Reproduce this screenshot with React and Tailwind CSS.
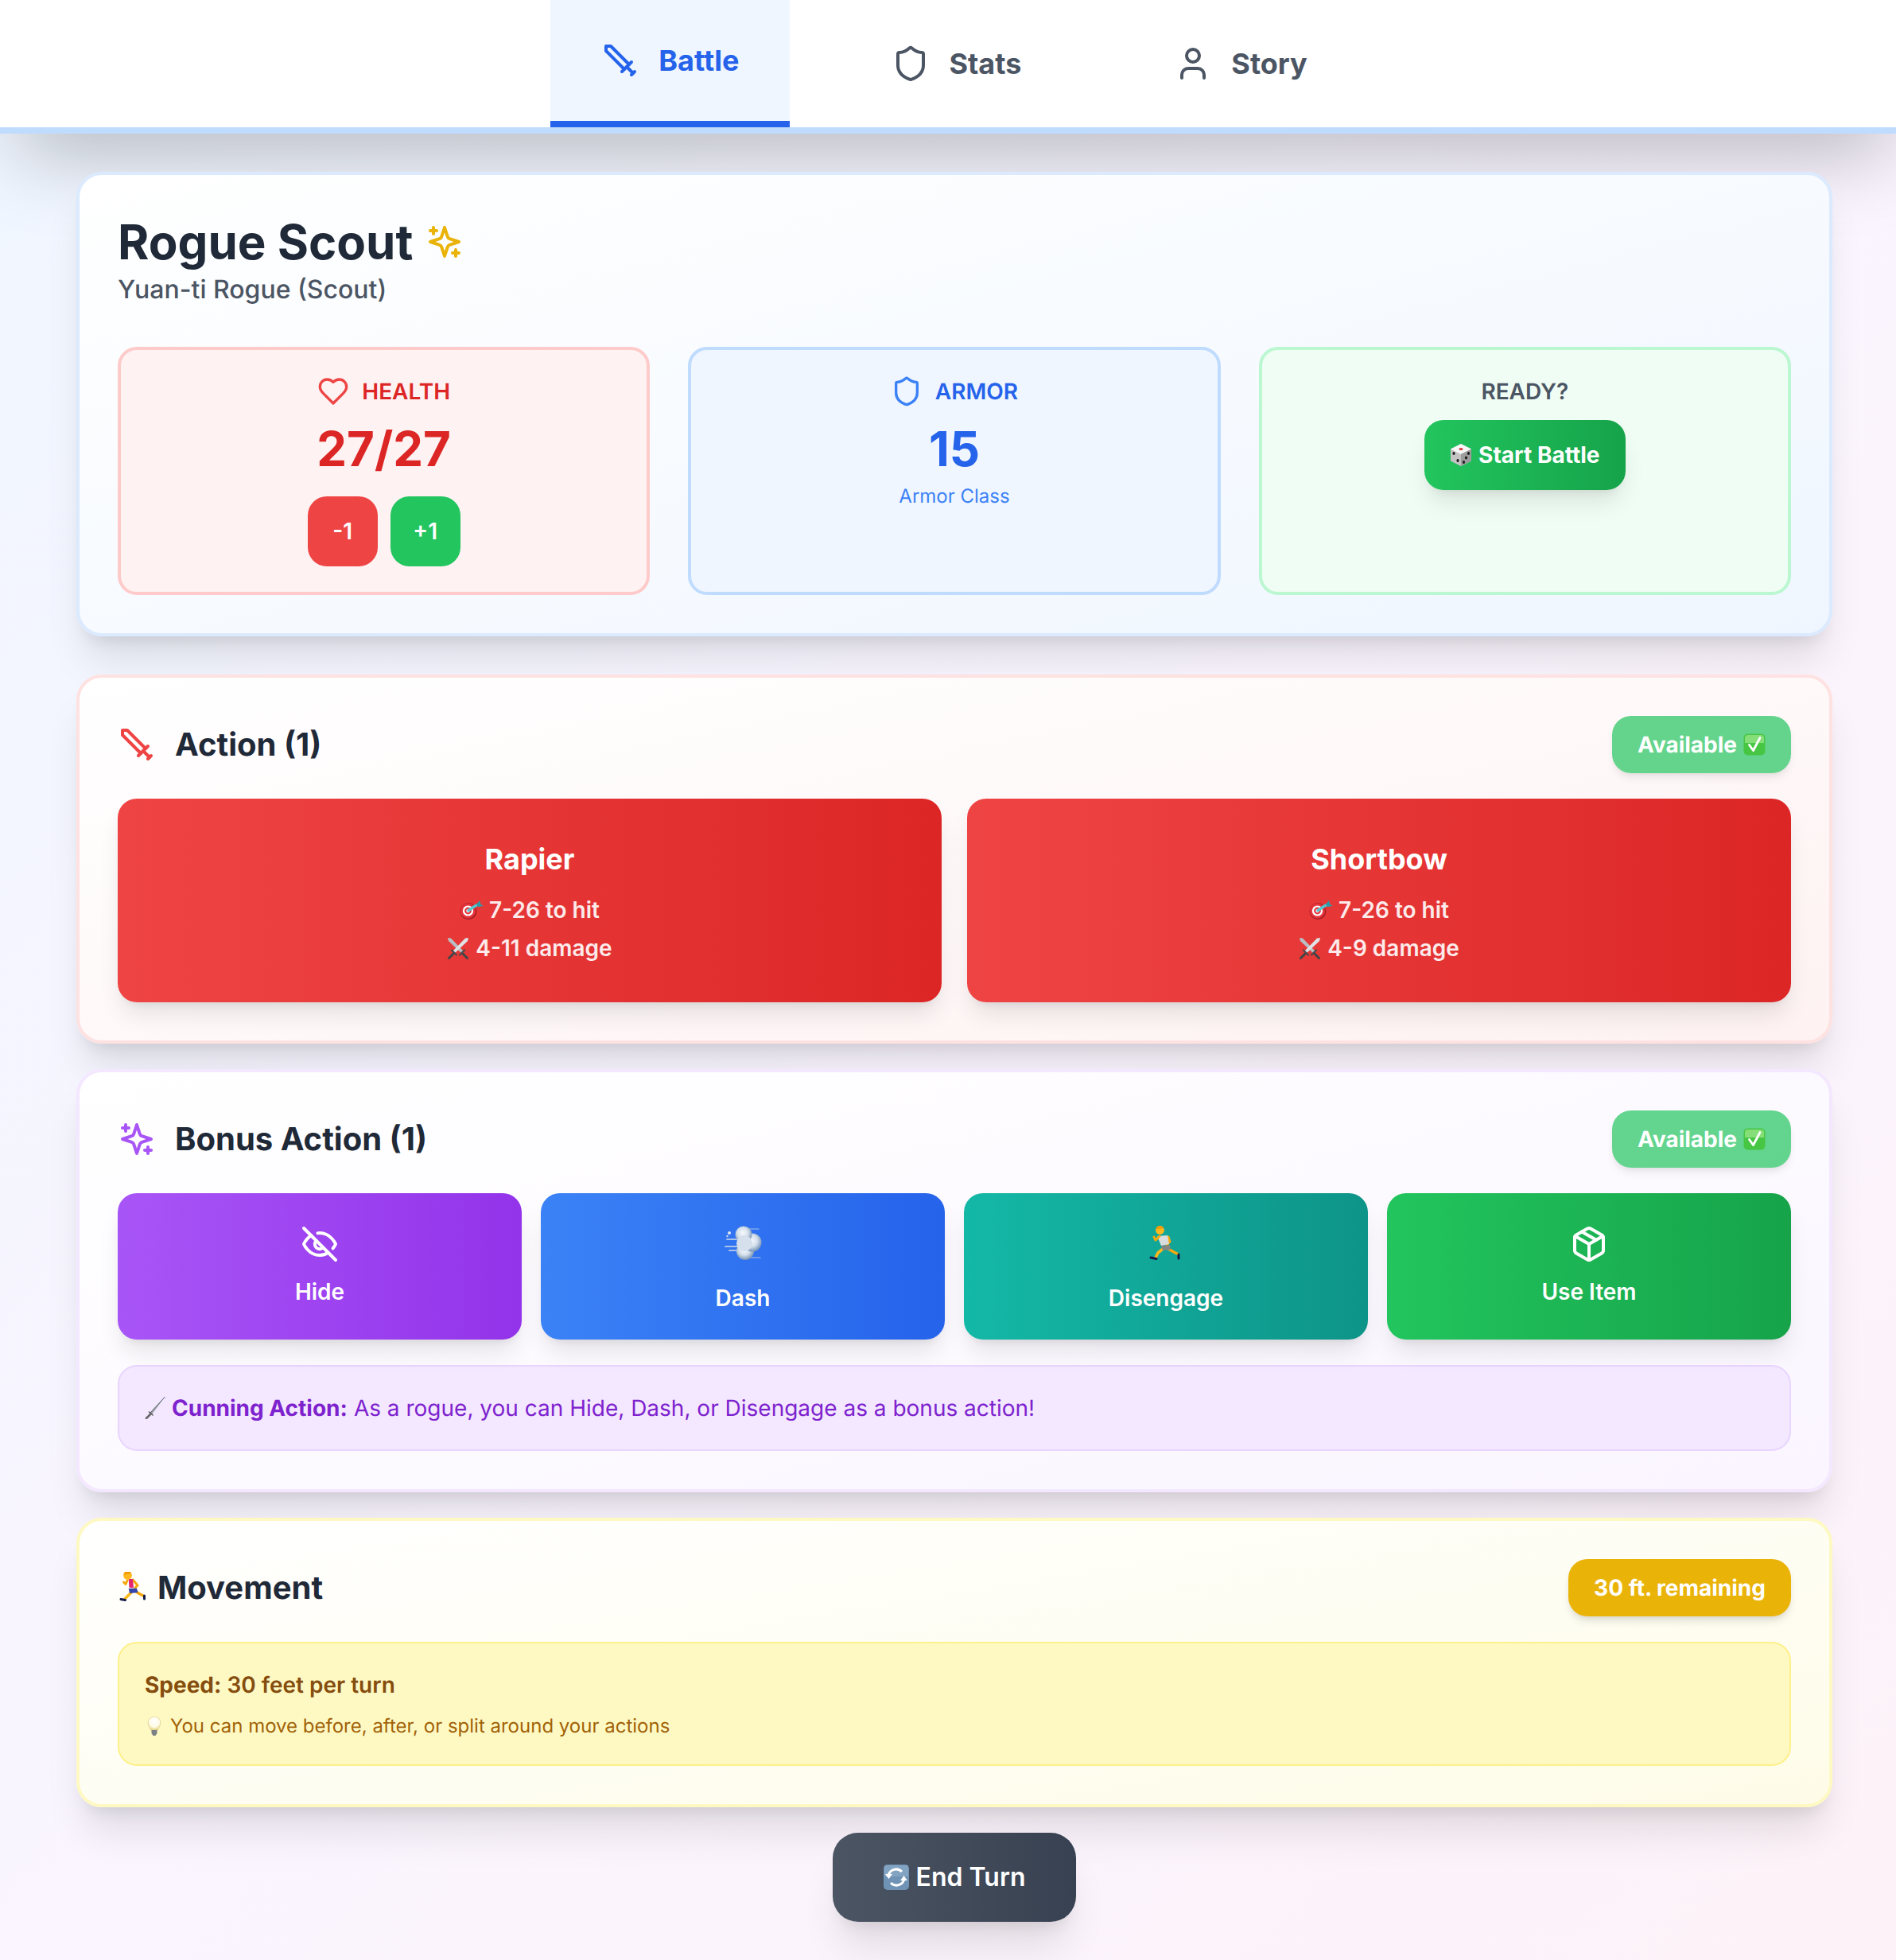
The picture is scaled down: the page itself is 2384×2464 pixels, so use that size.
const Ico = ({ size = 48, className = '', children }) => (
  <svg width={size} height={size} viewBox="0 0 24 24" fill="none" stroke="currentColor" strokeWidth="2" strokeLinecap="round" strokeLinejoin="round" className={`shrink-0 ${className}`}>
    {children}
  </svg>
);

const SwordIcon = (p) => (
  <Ico {...p}>
    <polyline points="14.5 17.5 3 6 3 3 6 3 17.5 14.5" />
    <line x1="13" x2="19" y1="19" y2="13" />
    <line x1="16" x2="20" y1="16" y2="20" />
    <line x1="19" x2="21" y1="21" y2="19" />
  </Ico>
);
const ShieldIcon = (p) => (
  <Ico {...p}>
    <path d="M20 13c0 5-3.5 7.5-7.66 8.95a1 1 0 0 1-.67-.01C7.5 20.5 4 18 4 13V6a1 1 0 0 1 1-1c2 0 4.5-1.2 6.24-2.72a1.17 1.17 0 0 1 1.52 0C14.51 3.81 17 5 19 5a1 1 0 0 1 1 1z" />
  </Ico>
);
const UserIcon = (p) => (
  <Ico {...p}>
    <path d="M19 21v-2a4 4 0 0 0-4-4H9a4 4 0 0 0-4 4v2" />
    <circle cx="12" cy="7" r="4" />
  </Ico>
);
const HeartIcon = (p) => (
  <Ico {...p}>
    <path d="M19 14c1.49-1.46 3-3.21 3-5.5A5.5 5.5 0 0 0 16.5 3c-1.76 0-3 .5-4.5 2-1.5-1.5-2.74-2-4.5-2A5.5 5.5 0 0 0 2 8.5c0 2.3 1.5 4.05 3 5.5l7 7Z" />
  </Ico>
);
const SparklesIcon = (p) => (
  <Ico {...p}>
    <path d="m12 3-1.912 5.813a2 2 0 0 1-1.275 1.275L3 12l5.813 1.912a2 2 0 0 1 1.275 1.275L12 21l1.912-5.813a2 2 0 0 1 1.275-1.275L21 12l-5.813-1.912a2 2 0 0 1-1.275-1.275L12 3Z" />
    <path d="M5 3v4" />
    <path d="M19 17v4" />
    <path d="M3 5h4" />
    <path d="M17 19h4" />
  </Ico>
);
const EyeOffIcon = (p) => (
  <Ico {...p}>
    <path d="M9.88 9.88a3 3 0 1 0 4.24 4.24" />
    <path d="M10.73 5.08A10.43 10.43 0 0 1 12 5c7 0 10 7 10 7a13.16 13.16 0 0 1-1.67 2.68" />
    <path d="M6.61 6.61A13.526 13.526 0 0 0 2 12s3 7 10 7a9.74 9.74 0 0 0 5.39-1.61" />
    <line x1="2" x2="22" y1="2" y2="22" />
  </Ico>
);
const PackageIcon = (p) => (
  <Ico {...p}>
    <path d="m7.5 4.27 9 5.15" />
    <path d="M21 8a2 2 0 0 0-1-1.73l-7-4a2 2 0 0 0-2 0l-7 4A2 2 0 0 0 3 8v8a2 2 0 0 0 1 1.73l7 4a2 2 0 0 0 2 0l7-4A2 2 0 0 0 21 16Z" />
    <path d="m3.3 7 8.7 5 8.7-5" />
    <path d="M12 22V12" />
  </Ico>
);

// emoji drawings (no emoji font in the sandbox)
const Dice = () => (
  <svg width="28" height="28" viewBox="0 0 28 28" className="shrink-0">
    <path d="M14 0 27 6.5v15L14 28 1 21.5v-15z" fill="#c4c4c4" />
    <path d="M14 0 27 6.5 14 13 1 6.5z" fill="#f7f7f7" />
    <path d="M14 13v15l13-6.5v-15z" fill="#9c9c9c" />
    <ellipse cx="14" cy="6.5" rx="2.6" ry="1.5" fill="#d9363e" />
    <ellipse cx="5" cy="12" rx="1.6" ry="2" fill="#1c1c1c" />
    <ellipse cx="10" cy="21" rx="1.6" ry="2" fill="#1c1c1c" />
    <ellipse cx="17.5" cy="23" rx="1.6" ry="2" fill="#1c1c1c" />
    <ellipse cx="23.5" cy="12" rx="1.6" ry="2" fill="#1c1c1c" />
    <ellipse cx="20.5" cy="17.5" rx="1.6" ry="2" fill="#1c1c1c" />
  </svg>
);
const Check = () => (
  <svg width="28" height="28" viewBox="0 0 28 28" className="shrink-0">
    <rect x="0.5" y="0.5" width="27" height="27" rx="5" fill="#47c644" />
    <path d="M2 6a4 4 0 0 1 4-4h16a4 4 0 0 1 4 4v6H2z" fill="#86de78" />
    <path d="M7.5 14.5 12.5 21.5 21 5.5" fill="none" stroke="#fff" strokeWidth="2.8" strokeLinecap="round" strokeLinejoin="round" />
  </svg>
);
const Dart = () => (
  <svg width="30" height="24" viewBox="0 0 30 24" className="shrink-0">
    <circle cx="11" cy="13.5" r="10.5" fill="#a51c24" />
    <circle cx="10.5" cy="13" r="9.5" fill="#e5343b" />
    <circle cx="10.5" cy="13" r="6.6" fill="#fff" />
    <circle cx="10.5" cy="13" r="4.4" fill="#e5343b" />
    <circle cx="10.5" cy="13" r="2.2" fill="#fff" />
    <path d="M11 12.5 21 6" stroke="#54c6cf" strokeWidth="3.4" strokeLinecap="round" />
    <path d="M21 5 25 0l1.5 5L30 7l-7 1z" fill="#2e9aa8" />
  </svg>
);
const Swords = () => (
  <svg width="28" height="28" viewBox="0 0 28 28" className="shrink-0">
    <path d="M1 1 5 1.5 21 18l-2.5 2.5L2 5z" fill="#b9bfc5" />
    <path d="M27 1 23 1.5 7 18l2.5 2.5L26 5z" fill="#dfe3e6" />
    <path d="M16 22.5l6-6M12 22.5l-6-6" stroke="#4a4a4a" strokeWidth="2.2" strokeLinecap="round" />
    <path d="M20 21l5.5 5.5M8 21l-5.5 5.5" stroke="#444" strokeWidth="3" strokeLinecap="round" />
  </svg>
);
const Dagger = () => (
  <svg width="26" height="28" viewBox="0 0 26 28" className="shrink-0">
    <path d="M25.5 0 7 20l2 2z" fill="#9aa1a6" />
    <path d="M25.5 0 7 20" stroke="#4f565b" strokeWidth="0.9" />
    <path d="M5.5 19l4.5 4" stroke="#5a5a5a" strokeWidth="1.6" strokeLinecap="round" />
    <path d="M7 22l-5 5" stroke="#666" strokeWidth="2.6" strokeLinecap="round" />
  </svg>
);
const Bulb = () => (
  <svg width="24" height="24" viewBox="0 0 24 24" className="shrink-0">
    <defs>
      <radialGradient id="bulbGlow" cx="50%" cy="35%" r="60%">
        <stop offset="0%" stopColor="#ffffff" />
        <stop offset="70%" stopColor="#fffbe6" />
        <stop offset="100%" stopColor="#ead98f" />
      </radialGradient>
    </defs>
    <path d="M12 0a8 8 0 0 0-8 8c0 3.4 2.6 5 3.4 9h9.2c.8-4 3.4-5.6 3.4-9a8 8 0 0 0-8-8z" fill="url(#bulbGlow)" stroke="#d8cb8c" strokeWidth="0.7" />
    <path d="M8.5 17h7v4l-2 3h-3l-2-3z" fill="#7c8186" />
  </svg>
);
const Sync = () => (
  <svg width="32" height="32" viewBox="0 0 32 32" className="shrink-0">
    <rect width="32" height="32" rx="5" fill="#6f93b5" />
    <path d="M1 1h30v14H1z" fill="#a9c3dc" opacity="0.35" />
    <path d="M6 14a10 10 0 0 1 17-5" fill="none" stroke="#fff" strokeWidth="3" />
    <path d="M26 18a10 10 0 0 1-17 5" fill="none" stroke="#fff" strokeWidth="3" />
    <path d="M2 12h9l-4.5 6zM30 20h-9l4.5-6z" fill="#fff" />
  </svg>
);
const Cloud = () => (
  <svg width="48" height="48" viewBox="10 10 48 48" className="shrink-0">
    <defs>
      <radialGradient id="puff" cx="45%" cy="40%" r="58%">
        <stop offset="0%" stopColor="#f6f9fc" />
        <stop offset="55%" stopColor="#d5e0ec" />
        <stop offset="100%" stopColor="#7d98b8" />
      </radialGradient>
    </defs>
    <g stroke="#cfdcea" strokeLinecap="round" opacity="0.75" fill="none">
      <path d="M42 15h12" strokeWidth="1.2" />
      <path d="M44 51h12" strokeWidth="1.2" />
      <path d="M14 28h16" strokeWidth="1.8" />
      <path d="M12 37h16" strokeWidth="1.8" />
      <path d="M17 42h10" strokeWidth="1.8" />
    </g>
    <circle cx="17" cy="20" r="2" fill="#dfe8f2" />
    <circle cx="14.5" cy="24" r="1.2" fill="#cfdbe8" />
    <circle cx="37" cy="43" r="11" fill="url(#puff)" />
    <circle cx="46" cy="32" r="11.5" fill="url(#puff)" />
    <circle cx="35" cy="22" r="10.5" fill="url(#puff)" />
    <circle cx="36" cy="33" r="10" fill="#d5e0ec" />
  </svg>
);

const Runner = ({ size, viewBox, shirt, shorts, head, arms, shirtPts, shortPts, front, back, foot1, foot2 }) => (
  <svg width={size} height={size} viewBox={viewBox} className="shrink-0">
    <g fill="none" strokeLinecap="round" strokeLinejoin="round">
      <polyline points={back} stroke="#f5a80c" strokeWidth="3.4" />
      <polyline points={front} stroke="#fbb81b" strokeWidth="3.6" />
      <polyline points={foot1} stroke="#141a4a" strokeWidth="3" />
      <polyline points={foot2} stroke="#141a4a" strokeWidth="3" />
      <polyline points={arms[0]} stroke="#f5a80c" strokeWidth="3" />
    </g>
    <polygon points={shortPts} fill={shorts} />
    <polygon points={shirtPts} fill={shirt} />
    <polyline points={arms[1]} fill="none" stroke="#f5a80c" strokeWidth="3" strokeLinecap="round" strokeLinejoin="round" />
    <circle cx={head[0]} cy={head[1]} r="5.4" fill="#ffb81f" />
    <path d={`M${head[0] - 5} ${head[1] - 1}a5 5 0 0 1 9.6-1.4l-3 .4z`} fill="#f09a05" />
  </svg>
);

const GreyRunner = () => (
  <Runner
    size={48} viewBox="12 10 48 48" shirt="#d9dcdc" shorts="#858583" head={[28.5, 16.5]}
    arms={['39,25 41,31 37,35', '28,24 23,29 21,25']}
    shirtPts="25,24 38,23 40,34 30,36" shortPts="30,36 41,35 42,41 32,42"
    front="31,41 26,45 23,51" back="39,40 46,44 51,46.5" foot1="17,51 24,52.5" foot2="52,47 52,52"
  />
);
const PinkRunner = () => (
  <Runner
    size={40} viewBox="8 11 40 40" shirt="#e4266f" shorts="#3345ab" head={[20.5, 15.5]}
    arms={['27,21 33,28 30,31', '20,22 18,26.5 15.5,24']}
    shirtPts="21.7,20 27,20 28,31 22.5,31" shortPts="21.7,32 32,31.7 33.5,37 23,38"
    front="25,37 21,41 17,45" back="31,36 36,39 40,41" foot1="12,45.5 17.5,46.5" foot2="41.5,41 41.5,45"
  />
);

const lgShadow = 'shadow-[0_20px_30px_-6px_rgba(0,0,0,0.1),0_8px_12px_-8px_rgba(0,0,0,0.1)]';
const cardClass = 'rounded-[32px] border-4 p-[48px] bg-linear-to-br/srgb from-[#ffffff] shadow-[0_40px_50px_-10px_rgba(0,0,0,0.1),0_16px_20px_-12px_rgba(0,0,0,0.1)]';
const headClass = 'text-[40px] leading-[56px] font-bold text-[#1f2937]';
const bigClass = 'text-[60px] leading-[72px] font-bold [text-rendering:auto]';

function Tab({ icon, label, active }) {
  return (
    <button className={`flex items-center gap-[24px] px-[64px] text-[36px] leading-[56px] font-bold ${active ? 'bg-[#eff6ff] text-[#2563eb] border-b-8 border-[#2563eb]' : 'text-[#4b5563]'}`}>
      {icon}
      {label}
    </button>
  );
}

function Badge() {
  return (
    <div className="flex items-center gap-[8px] h-[72px] px-[32px] rounded-[24px] bg-[#22c55e]/70 text-white text-[28px] leading-[40px] font-bold shadow-[0_8px_12px_-2px_rgba(0,0,0,0.07),0_4px_8px_-4px_rgba(0,0,0,0.07)]">
      Available <Check />
    </div>
  );
}

function Weapon({ name, hit, damage }) {
  return (
    <button className={`flex flex-col items-center p-[48px] rounded-[24px] text-white bg-linear-to-r/srgb from-[#ef4444] to-[#dc2626] ${lgShadow}`}>
      <div className="text-[36px] leading-[56px] font-bold mb-[16px]">{name}</div>
      <div className="flex items-center justify-center gap-[7px] h-[40px] text-[28px] leading-[40px] font-semibold text-white/90"><Dart />{hit} to hit</div>
      <div className="flex items-center justify-center gap-[8px] h-[40px] mt-[8px] text-[28px] leading-[40px] font-semibold text-white/90"><Swords />{damage} damage</div>
    </button>
  );
}

function Bonus({ icon, label, gradient, tall }) {
  return (
    <button className={`flex flex-col items-center h-[184px] pt-[40px] rounded-[24px] text-white bg-linear-to-r/srgb ${gradient} ${lgShadow}`}>
      <div className={tall ? 'h-[64px] mb-[8px]' : 'h-[48px] mb-[16px]'}>{icon}</div>
      <div className="text-[28px] leading-[40px] font-semibold">{label}</div>
    </button>
  );
}

function StatLabel({ icon, label, className }) {
  return (
    <div className={`flex items-center justify-center gap-[16px] h-[40px] mb-[16px] text-[28px] leading-[40px] font-semibold ${className}`}>
      {icon}
      {label}
    </div>
  );
}

export default function App() {
  return (
    <div className="w-[2384px] overflow-hidden font-[Inter,sans-serif] [text-rendering:geometricPrecision]">
      <div className="w-[2400px] min-h-[2464px] bg-linear-to-br/srgb from-[#eff6ff] via-[#faf5ff] to-[#fdf2f8]">
        <nav className="flex justify-center gap-[64px] h-[168px] bg-white border-b-8 border-[#bfdbfe] shadow-[0_50px_100px_-24px_rgba(0,0,0,0.25)]">
          <Tab active label="Battle" icon={<SwordIcon />} />
          <Tab label="Stats" icon={<ShieldIcon />} />
          <Tab label="Story" icon={<UserIcon />} />
        </nav>

        <main className="px-[96px] pt-[48px] pb-[48px]">
          <section className={`${cardClass} border-[#dbeafe] to-[#eff6ff] mb-[48px]`}>
            <div className={`flex items-center gap-[16px] text-[#1f2937] ${bigClass}`}>
              Rogue Scout
              <SparklesIcon className="text-[#eab308]" />
            </div>
            <p className="text-[32px] leading-[48px] font-medium text-[#4b5563] mb-[48px]">Yuan-ti Rogue (Scout)</p>

            <div className="grid grid-cols-3 gap-[48px]">
              <div className="flex flex-col items-center p-[32px] rounded-[24px] border-4 border-[#fecaca] bg-[#fef2f2]">
                <StatLabel label="HEALTH" className="text-[#dc2626]" icon={<HeartIcon size={40} className="text-[#ef4444]" />} />
                <div className={`text-[#dc2626] ${bigClass}`}>27/27</div>
                <div className="flex gap-[16px] mt-[24px]">
                  <button className="w-[88px] h-[88px] rounded-[24px] bg-[#ef4444] text-white text-[28px] font-semibold">-1</button>
                  <button className="w-[88px] h-[88px] rounded-[24px] bg-[#22c55e] text-white text-[28px] font-semibold">+1</button>
                </div>
              </div>

              <div className="flex flex-col items-center p-[32px] rounded-[24px] border-4 border-[#bfdbfe] bg-[#eff6ff]">
                <StatLabel label="ARMOR" className="text-[#2563eb]" icon={<ShieldIcon size={40} className="text-[#3b82f6]" />} />
                <div className={`text-[#2563eb] ${bigClass}`}>15</div>
                <div className="mt-[8px] text-[24px] leading-[32px] text-[#3b82f6]">Armor Class</div>
              </div>

              <div className="flex flex-col items-center p-[32px] rounded-[24px] border-4 border-[#bbf7d0] bg-[#f0fdf4]">
                <StatLabel label="READY?" className="text-[#4b5563]" />
                <button className={`flex items-center gap-[8px] h-[88px] px-[32px] rounded-[24px] text-white text-[28px] leading-[40px] font-bold bg-linear-to-r/srgb from-[#22c55e] to-[#16a34a] ${lgShadow}`}>
                  <Dice />
                  Start Battle
                </button>
              </div>
            </div>
          </section>

          <div className="flex flex-col gap-[32px]">
            <section className={`${cardClass} border-[#fee2e2] to-[#fef2f2]`}>
              <div className="flex items-center justify-between mb-[32px]">
                <div className={`flex items-center gap-[24px] ${headClass}`}>
                  <SwordIcon className="text-[#ef4444]" />
                  Action (1)
                </div>
                <Badge />
              </div>
              <div className="grid grid-cols-2 gap-[32px]">
                <Weapon name="Rapier" hit="7-26" damage="4-11" />
                <Weapon name="Shortbow" hit="7-26" damage="4-9" />
              </div>
            </section>

            <section className={`${cardClass} border-[#f3e8ff] to-[#faf5ff]`}>
              <div className="flex items-center justify-between mb-[32px]">
                <div className={`flex items-center gap-[24px] ${headClass}`}>
                  <SparklesIcon className="text-[#a855f7]" />
                  Bonus Action (1)
                </div>
                <Badge />
              </div>
              <div className="grid grid-cols-4 gap-[24px]">
                <Bonus label="Hide" icon={<EyeOffIcon />} gradient="from-[#a855f7] to-[#9333ea]" />
                <Bonus tall label="Dash" icon={<Cloud />} gradient="from-[#3b82f6] to-[#2563eb]" />
                <Bonus tall label="Disengage" icon={<GreyRunner />} gradient="from-[#14b8a6] to-[#0d9488]" />
                <Bonus label="Use Item" icon={<PackageIcon />} gradient="from-[#22c55e] to-[#16a34a]" />
              </div>
              <div className="flex items-center mt-[32px] p-[32px] rounded-[24px] border-2 border-[#e9d5ff] bg-[#f3e8ff] text-[28px] leading-[40px] text-[#7e22ce]">
                <Dagger />
                <strong className="ml-[8px] mr-[8px] font-bold">Cunning Action:</strong>
                As a rogue, you can Hide, Dash, or Disengage as a bonus action!
              </div>
            </section>

            <section className={`${cardClass} border-[#fef9c3] to-[#fefce8]`}>
              <div className="flex items-center justify-between mb-[32px]">
                <div className={`flex items-center gap-[10px] ${headClass}`}>
                  <PinkRunner />
                  Movement
                </div>
                <div className="flex items-center h-[72px] px-[32px] rounded-[24px] bg-[#eab308] text-white text-[28px] leading-[40px] font-bold shadow-[0_8px_12px_-2px_rgba(0,0,0,0.1),0_4px_8px_-4px_rgba(0,0,0,0.1)]">
                  30 ft. remaining
                </div>
              </div>
              <div className="p-[32px] rounded-[24px] border-2 border-[#fef08a] bg-[#fef9c3]">
                <div className="text-[28px] leading-[40px] font-semibold text-[#854d0e]"><strong className="font-bold">Speed:</strong> 30 feet per turn</div>
                <div className="flex items-center gap-[8px] mt-[16px] text-[24px] leading-[32px] text-[#a16207]"><Bulb />You can move before, after, or split around your actions</div>
              </div>
            </section>
          </div>

          <div className="flex justify-center mt-[32px]">
            <button className="flex items-center gap-[9px] h-[112px] px-[64px] rounded-[32px] text-white text-[32px] leading-[48px] font-semibold bg-linear-to-r/srgb from-[#4b5563] to-[#374151] shadow-[0_40px_50px_-10px_rgba(0,0,0,0.1),0_16px_20px_-12px_rgba(0,0,0,0.1)]">
              <Sync />
              End Turn
            </button>
          </div>
        </main>
      </div>
    </div>
  );
}
